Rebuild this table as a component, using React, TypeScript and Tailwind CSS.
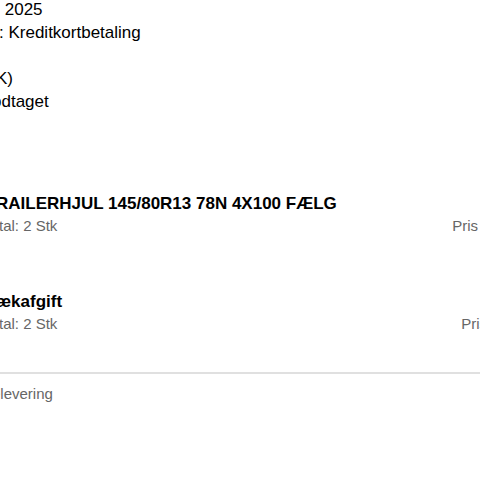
export default function App() {
  return (
    <div
      className="w-[480px] h-[480px] overflow-hidden bg-white text-black"
      style={{ fontFamily: '"Liberation Sans", Arial, sans-serif' }}
    >
      {/* order info, cut off on the left */}
      <div className="-mt-[2px] text-[17px] leading-[23px]">
        <div>&nbsp;2025</div>
        <div className="-ml-[1px]">: Kreditkortbetaling</div>
        <div>&nbsp;</div>
        <div className="-ml-[4px]">K)</div>
        <div className="-ml-[8px]">odtaget</div>
      </div>

      {/* line items */}
      <div className="mt-[80px]">
        <div className="-ml-[4px] font-bold text-[17px] leading-[22px]">
          RAILERHJUL 145/80R13 78N 4X100 FÆLG
        </div>
        <div className="flex justify-between text-[15px] leading-[21px] text-[#666]">
          <span className="-ml-[1px]">tal: 2 Stk</span>
          <span className="mr-[2px]">Pris</span>
        </div>
      </div>

      <div className="mt-[55px]">
        <div className="-ml-[4px] font-bold text-[17px] leading-[22px]">ækafgift</div>
        <div className="flex justify-between text-[15px] leading-[21px] text-[#666]">
          <span className="-ml-[1px]">tal: 2 Stk</span>
          <span className="-mr-[7px]">Pris</span>
        </div>
      </div>

      <div className="mt-[38px] border-t-2 border-[#e0e0e0] pt-[9px] text-[15px] leading-[21px] text-[#666]">
        <span className="-ml-[8px] inline-block">elevering</span>
      </div>
    </div>
  );
}
